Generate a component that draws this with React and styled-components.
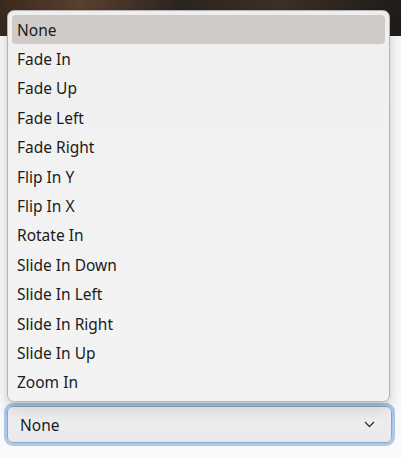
import React from "react";
import styled, { createGlobalStyle } from "styled-components";

const options = [
  "None",
  "Fade In",
  "Fade Up",
  "Fade Left",
  "Fade Right",
  "Flip In Y",
  "Flip In X",
  "Rotate In",
  "Slide In Down",
  "Slide In Left",
  "Slide In Right",
  "Slide In Up",
  "Zoom In",
];

const GlobalStyle = createGlobalStyle`
  html, body {
    margin: 0;
    padding: 0;
    background: #f9f9f9;
    font-family: "Noto Sans", "Open Sans", sans-serif;
  }
`;

const Page = styled.div`
  width: 401px;
  height: 458px;
  display: flex;
  flex-direction: column;
  overflow: hidden;
`;

const Banner = styled.div`
  height: 36px;
  flex-shrink: 0;
  background: linear-gradient(90deg, #3a2a1e 0%, #5a4030 20%, #2b2520 45%, #3c3026 70%, #1f1c1a 100%);
`;

const Body = styled.div`
  flex: 1;
  display: flex;
  flex-direction: column;
  justify-content: flex-end;
  padding: 0 6px 12px 4px;
`;

const Field = styled.div`
  position: relative;
`;

const Select = styled.div`
  box-sizing: border-box;
  height: 37px;
  display: flex;
  align-items: center;
  justify-content: space-between;
  padding: 0 16px 0 12px;
  border: 1px solid #8ea6c4;
  border-radius: 6px;
  background: linear-gradient(180deg, #f1f1f1 0%, #e9e9e9 100%);
  box-shadow: 0 0 0 3px #aac7ee;
  margin: 3px;
  font-size: 15.5px;
  color: #1b1b1b;
`;

const Menu = styled.ul`
  position: absolute;
  left: 3px;
  bottom: 100%;
  margin: 0 0 1px 0;
  width: 383px;
  box-sizing: border-box;
  list-style: none;
  padding: 4px 4px;
  border: 1px solid #b4b4b4;
  border-radius: 7px;
  background: linear-gradient(180deg, #f0eeed 0%, #f2f2f3 40%, #f3f3f3 100%);
  box-shadow: 0 8px 16px rgba(0, 0, 0, 0.14), 0 2px 4px rgba(0, 0, 0, 0.08);
`;

const Item = styled.li`
  height: 29.4px;
  display: flex;
  align-items: center;
  padding-left: 5px;
  border-radius: 4px;
  font-size: 15.5px;
  color: #1b1b1b;
  background: ${(p) => (p.$active ? "#cfcbc9" : "transparent")};
`;

const Chevron = () => (
  <svg width="11" height="7" viewBox="0 0 11 7" fill="none">
    <path d="M1 1l4.5 4.5L10 1" stroke="#333" strokeWidth="1.3" />
  </svg>
);

export default function App() {
  return (
    <Page>
      <GlobalStyle />
      <Banner />
      <Body>
        <Field>
          <Menu>
            {options.map((o, i) => (
              <Item key={o} $active={i === 0}>
                {o}
              </Item>
            ))}
          </Menu>
          <Select>
            <span>None</span>
            <Chevron />
          </Select>
        </Field>
      </Body>
    </Page>
  );
}
